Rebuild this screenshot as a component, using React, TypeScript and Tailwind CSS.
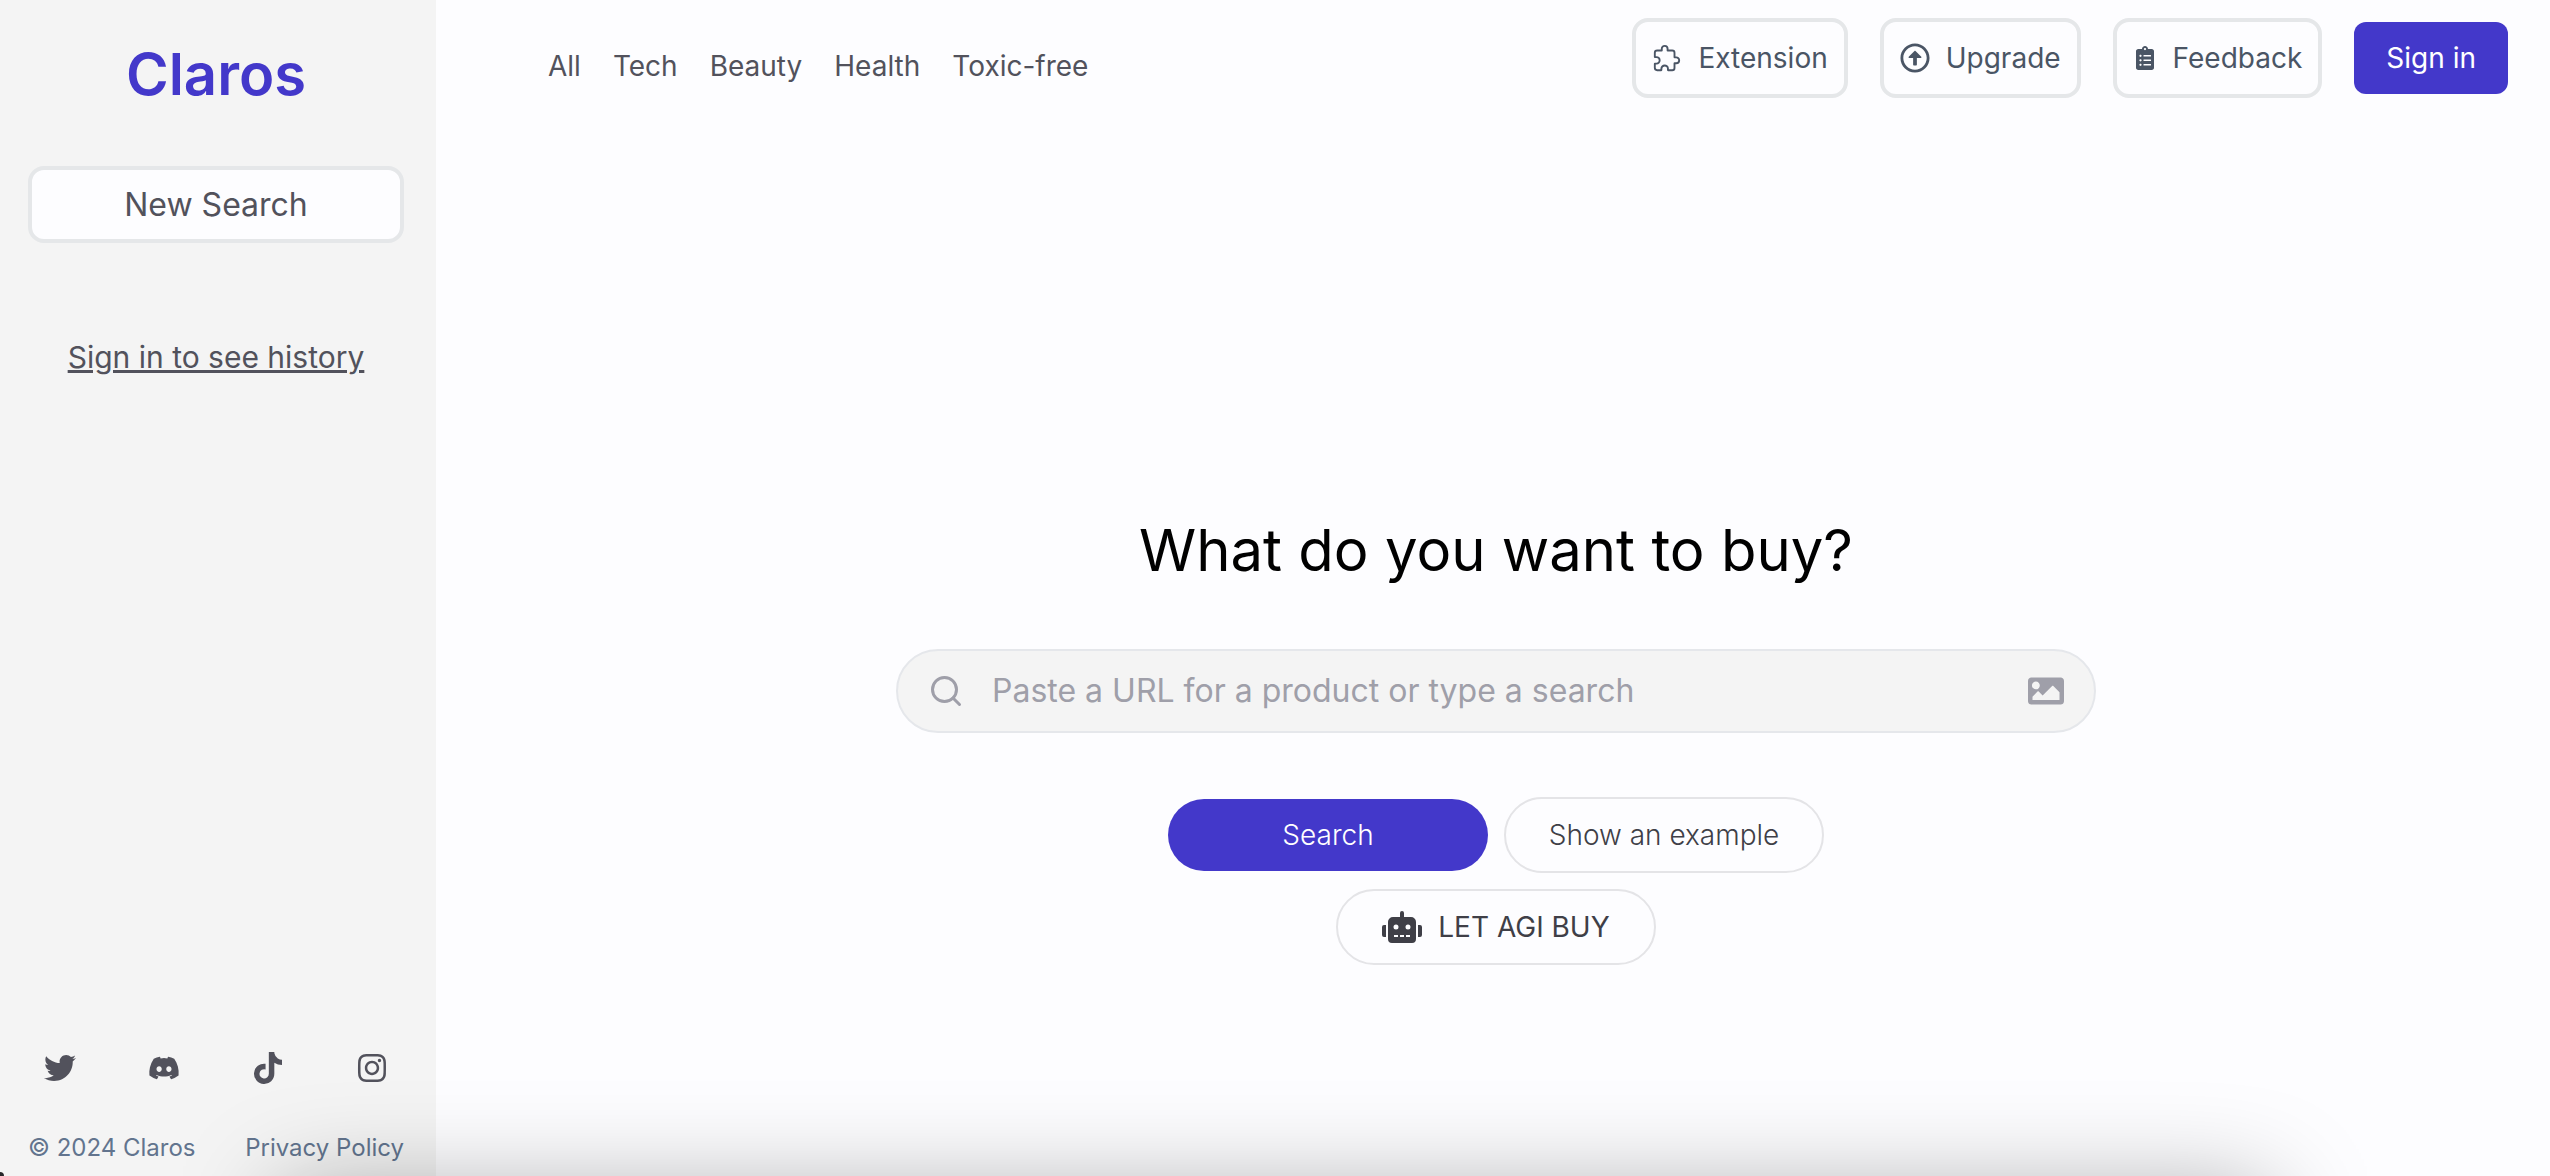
import type { ReactNode } from "react";
import {
  FaClipboardList,
  FaDiscord,
  FaImage,
  FaInstagram,
  FaRegArrowAltCircleUp,
  FaRobot,
  FaTiktok,
  FaTwitter,
} from "react-icons/fa";
import { FiSearch } from "react-icons/fi";
import { IoExtensionPuzzleOutline } from "react-icons/io5";

const categories = ["All", "Tech", "Beauty", "Health", "Toxic-free"];

const socials = [
  { name: "Twitter", Icon: FaTwitter },
  { name: "Discord", Icon: FaDiscord },
  { name: "TikTok", Icon: FaTiktok },
  { name: "Instagram", Icon: FaInstagram },
];

function ToolbarButton({ icon, label }: { icon: ReactNode; label: string }) {
  return (
    <button
      type="button"
      className="flex h-20 items-center gap-4 rounded-2xl border-4 border-[#e5e7e9] px-4 text-[28px] text-gray-600"
    >
      {icon}
      <span>{label}</span>
    </button>
  );
}

function Sidebar() {
  return (
    <aside className="flex w-[436px] shrink-0 flex-col bg-[#f4f4f4] pr-8 pl-7">
      <h1 className="mt-9 text-center text-[58px] leading-[76px] font-semibold text-[#4338ca]">Claros</h1>
      <button
        type="button"
        className="mt-[54px] h-[77px] rounded-2xl border-4 border-[#e5e7e9] bg-[#fdfdff] text-[32px]"
      >
        New Search
      </button>
      <a href="#signin" className="mt-[94px] self-center text-[30px] leading-10 underline">
        Sign in to see history
      </a>
      <div className="mt-auto flex justify-between px-4">
        {socials.map(({ name, Icon }) => (
          <a key={name} href="#social" aria-label={name}>
            <Icon size={32} />
          </a>
        ))}
      </div>
      <div className="mt-11 mb-2 flex justify-between text-[24px] leading-10 text-slate-500">
        <span>© 2024 Claros</span>
        <a href="#privacy">Privacy Policy</a>
      </div>
    </aside>
  );
}

export default function App() {
  return (
    <div className="relative flex min-h-screen overflow-hidden bg-[#fdfdff] font-['Inter',sans-serif] text-zinc-600">
      <Sidebar />
      <main className="flex flex-1 flex-col">
        <header className="flex justify-between pt-[18px] pr-[42px] pl-28">
          <nav className="flex items-center gap-8 pt-4 text-[28px]">
            {categories.map((c) => (
              <a key={c} href="#category">
                {c}
              </a>
            ))}
          </nav>
          <div className="flex items-center gap-8">
            <ToolbarButton icon={<IoExtensionPuzzleOutline size={30} />} label="Extension" />
            <ToolbarButton icon={<FaRegArrowAltCircleUp size={30} />} label="Upgrade" />
            <ToolbarButton icon={<FaClipboardList size={24} />} label="Feedback" />
            <button type="button" className="h-[72px] rounded-xl bg-[#4338ca] px-8 text-[28px] text-white">
              Sign in
            </button>
          </div>
        </header>
        <section className="mt-[414px] flex flex-col items-center pl-[6px]">
          <h2 className="text-[58px] leading-[76px] text-black">What do you want to buy?</h2>
          <label className="mt-[61px] flex h-[84px] w-[1200px] max-w-full items-center rounded-full border-2 border-gray-200 bg-[#f4f4f4] px-[30px] text-zinc-400">
            <FiSearch size={36} />
            <input
              aria-label="Search"
              placeholder="Paste a URL for a product or type a search"
              className="ml-7 flex-1 text-[32px] outline-none placeholder:text-zinc-400"
            />
            <button type="button" aria-label="Search by image">
              <FaImage size={36} />
            </button>
          </label>
          <div className="mt-16 flex items-center gap-4 text-[28px] font-light">
            <button type="button" className="h-[72px] w-80 rounded-full bg-[#4338ca] text-white">
              Search
            </button>
            <button type="button" className="h-[76px] w-80 rounded-full border-2 border-zinc-200 text-zinc-700">
              Show an example
            </button>
          </div>
          <button
            type="button"
            className="mt-4 flex h-[76px] w-80 items-center justify-center gap-4 rounded-full border-2 border-zinc-200 text-[28px] text-zinc-700"
          >
            <FaRobot size={40} />
            LET AGI BUY
          </button>
        </section>
      </main>
      <div className="pointer-events-none absolute inset-x-[280px] top-full mt-4 h-40 shadow-[0_0_100px_rgba(0,0,0,0.34)]" />
      <div className="pointer-events-none absolute bottom-0 left-0 size-1 rounded-tr-full bg-zinc-800" />
    </div>
  );
}
